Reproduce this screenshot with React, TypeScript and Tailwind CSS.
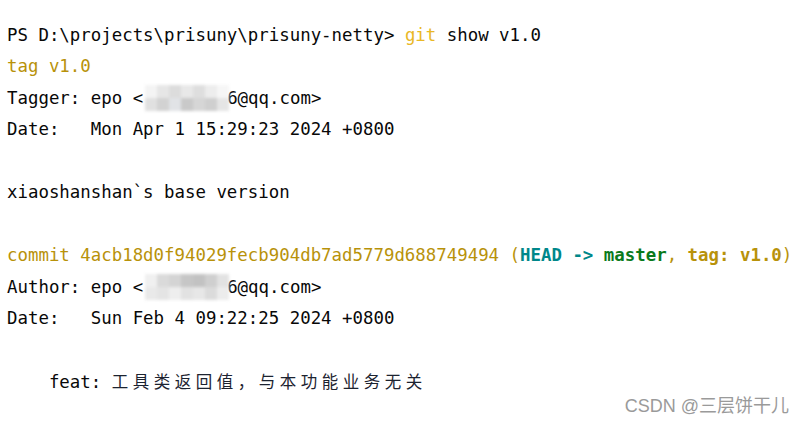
import React from "react";

const Mosaic = ({ shades }: { shades: string[] }) => (
  <span className="relative inline-block w-[84px] h-[22px] align-[-5px] overflow-visible">
    <span className="absolute left-[2px] top-[-2px] grid grid-cols-7 grid-rows-2 w-[84px] h-[26px] blur-[1.5px]">
      {shades.map((c, i) => (
        <span key={i} style={{ backgroundColor: c }} />
      ))}
    </span>
  </span>
);

const shadesA = [
  "#f4f4f4", "#e6e6e6", "#dcdcdc", "#e8e8e8", "#dedede", "#ededed", "#f6f6f6",
  "#e0e0e0", "#d2d2d2", "#e1e3e6", "#c9c9c9", "#d6d6d6", "#cfcfcf", "#e5e5e5",
];
const shadesB = [
  "#f0f0f0", "#dadada", "#d4d4d4", "#c6c6c6", "#c2c2c2", "#cfcfcf", "#e2e2e2",
  "#e9e9e9", "#e4e4e4", "#eeeeee", "#e2e2e2", "#e7e7e7", "#dbdbdb", "#ececec",
];

export default function App() {
  const gold = "text-[#b8920a]";
  return (
    <div className="relative w-[804px] h-[424px] bg-white overflow-hidden">
      <div
        className="pt-[20px] pl-[7px] text-[17.4px] leading-[31.45px] text-[#080808] whitespace-pre"
        style={{ fontFamily: '"DejaVu Sans Mono", "Liberation Mono", monospace' }}
      >
        <div>
          PS D:\projects\prisuny\prisuny-netty&gt; <span className="text-[#e9b826]">git</span> show v1.0
        </div>
        <div className={gold}>tag v1.0</div>
        <div>
          Tagger: epo &lt;<Mosaic shades={shadesA} />6@qq.com&gt;
        </div>
        <div>Date:   Mon Apr 1 15:29:23 2024 +0800</div>
        <div>&nbsp;</div>
        <div>xiaoshanshan`s base version</div>
        <div>&nbsp;</div>
        <div>
          <span className={gold}>commit 4acb18d0f94029fecb904db7ad5779d688749494 (</span>
          <span className="text-[#00878a] font-bold">HEAD -&gt; </span>
          <span className="text-[#0a7a1c] font-bold">master</span>
          <span className={gold}>, </span>
          <span className={`${gold} font-bold`}>tag: v1.0</span>
          <span className={gold}>)</span>
        </div>
        <div>
          Author: epo &lt;<Mosaic shades={shadesB} />6@qq.com&gt;
        </div>
        <div>Date:   Sun Feb 4 09:22:25 2024 +0800</div>
        <div>&nbsp;</div>
        <div>
          {"    feat: "}
          <span
            className="text-[16.5px] tracking-[4.5px] text-[#1c2330]"
            style={{ fontFamily: '"Noto Sans CJK SC", sans-serif' }}
          >
            工具类返回值，与本功能业务无关
          </span>
        </div>
      </div>
      <div
        className="absolute right-[15px] bottom-[9px] text-[18px] text-[#9a9a9a] leading-none"
        style={{ fontFamily: '"Liberation Sans", "Noto Sans CJK SC", sans-serif' }}
      >
        CSDN @三层饼干儿
      </div>
    </div>
  );
}
